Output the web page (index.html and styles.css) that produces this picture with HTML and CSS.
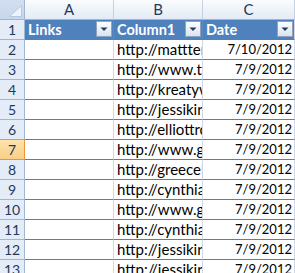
FILE: index.html
```html
<!DOCTYPE html>
<html>
<head>
<meta charset="utf-8">
<link rel="stylesheet" href="styles.css">
</head>
<body>
<div class="sheet">
  <div class="corner"><svg class="corner-tri" width="13" height="12" viewBox="0 0 13 12"><path d="M12.5 0.5 L12.5 11.5 L0.5 11.5 Z" fill="#f0f4fa" stroke="#b7c8de" stroke-width="1"/></svg></div>
  <div class="colhead">A</div>
  <div class="colhead">B</div>
  <div class="colhead">C</div>

  <div class="rowhead">1</div>
  <div class="th"><span class="tt">Links</span><span class="fb"><svg width="16" height="16" viewBox="0 0 16 16"><defs><linearGradient id="g1" x1="0" y1="0" x2="0" y2="1"><stop offset="0" stop-color="#ffffff"/><stop offset="1" stop-color="#d9e2ee"/></linearGradient></defs><rect x="0.5" y="0.5" width="15" height="15" fill="url(#g1)" stroke="#8ea3bf"/><path d="M4.5 6.5 L11.5 6.5 L8 10 Z" fill="#1f3a68"/></svg></span></div>
  <div class="th"><span class="tt">Column1</span><span class="fb"><svg width="16" height="16" viewBox="0 0 16 16"><rect x="0.5" y="0.5" width="15" height="15" fill="url(#g1)" stroke="#8ea3bf"/><path d="M4.5 6.5 L11.5 6.5 L8 10 Z" fill="#1f3a68"/></svg></span></div>
  <div class="th last"><span class="tt">Date</span><span class="fb"><svg width="16" height="16" viewBox="0 0 16 16"><rect x="0.5" y="0.5" width="15" height="15" fill="url(#g1)" stroke="#8ea3bf"/><path d="M4.5 6.5 L11.5 6.5 L8 10 Z" fill="#1f3a68"/></svg></span></div>

  <div class="rowhead">2</div><div class="c"></div><div class="c url">http://mattternhall.com/</div><div class="c date">7/10/2012</div>
  <div class="rowhead">3</div><div class="c"></div><div class="c url">http://www.twitter.com/</div><div class="c date">7/9/2012</div>
  <div class="rowhead">4</div><div class="c"></div><div class="c url">http://kreatywna.pl/</div><div class="c date">7/9/2012</div>
  <div class="rowhead">5</div><div class="c"></div><div class="c url">http://jessikirsch.com/</div><div class="c date">7/9/2012</div>
  <div class="rowhead">6</div><div class="c"></div><div class="c url">http://elliottrogers.com/</div><div class="c date">7/9/2012</div>
  <div class="rowhead sel">7</div><div class="c"></div><div class="c url">http://www.google.com/</div><div class="c date">7/9/2012</div>
  <div class="rowhead">8</div><div class="c"></div><div class="c url">http://greecelovers.com/</div><div class="c date">7/9/2012</div>
  <div class="rowhead">9</div><div class="c"></div><div class="c url">http://cynthiaskitchen.com/</div><div class="c date">7/9/2012</div>
  <div class="rowhead">10</div><div class="c"></div><div class="c url">http://www.google.com/</div><div class="c date">7/9/2012</div>
  <div class="rowhead">11</div><div class="c"></div><div class="c url">http://cynthiaskitchen.com/</div><div class="c date">7/9/2012</div>
  <div class="rowhead">12</div><div class="c"></div><div class="c url">http://jessikirsch.com/</div><div class="c date">7/9/2012</div>
  <div class="rowhead">13</div><div class="c"></div><div class="c url">http://jessikirsch.com/</div><div class="c date">7/9/2012</div>
</div>
</body>
</html>
```
FILE: styles.css
```css
html, body {
  margin: 0;
  padding: 0;
  background: #ffffff;
}
body {
  font-family: Lato, "Liberation Sans", sans-serif;
  font-size: 14px;
}
.sheet {
  display: grid;
  grid-template-columns: 25px 89px 89px 92px;
  grid-auto-rows: 20px;
  width: 295px;
  height: 273px;
  overflow: hidden;
}
.corner {
  box-sizing: border-box;
  background: linear-gradient(#d3dff0, #c6d6ec);
  border-right: 1px solid #9eb6ce;
  border-bottom: 1px solid #9eb6ce;
  position: relative;
}
.corner-tri {
  position: absolute;
  right: 2px;
  bottom: 2px;
}
.colhead {
  box-sizing: border-box;
  background: linear-gradient(#fafcfe, #e3ebf6);
  border-right: 1px solid #c3d1e2;
  border-bottom: 1px solid #9eb6ce;
  text-align: center;
  color: #1f3a5c;
  line-height: 19px;
  font-size: 15px;
}
.rowhead {
  box-sizing: border-box;
  background: #e4ecf7;
  border-right: 1px solid #9eb6ce;
  border-bottom: 1px solid #9eb6ce;
  text-align: center;
  color: #1f3a5c;
  line-height: 19px;
  font-size: 14px;
}
.rowhead.sel {
  background: linear-gradient(#fde3ad, #f9cf86);
  border-right-color: #f29436;
  border-bottom-color: #f29436;
  box-shadow: 0 -1px 0 #f29436;
}
.th {
  box-sizing: border-box;
  position: relative;
  background: #4f81bd;
  color: #ffffff;
  font-weight: bold;
  font-size: 14.5px;
  border-right: 1px solid #5b8ac3;
  border-bottom: 1px solid #4f81bd;
  line-height: 19px;
  padding-left: 3px;
  white-space: nowrap;
  overflow: hidden;
}
.th.last {
  border-right-color: #d0d7e5;
}
.fb {
  position: absolute;
  right: 1px;
  top: 1px;
  width: 16px;
  height: 16px;
  line-height: 0;
}
.c {
  box-sizing: border-box;
  border-right: 1px solid #d0d7e5;
  border-bottom: 1px solid #4f81bd;
  overflow: hidden;
  white-space: nowrap;
  text-overflow: clip;
  line-height: 19px;
  padding-left: 3px;
  color: #000000;
}
.url {
  font-size: 15px;
}
.date {
  font-size: 13px;
  text-align: right;
  padding-left: 0;
  padding-right: 2px;
}
```
